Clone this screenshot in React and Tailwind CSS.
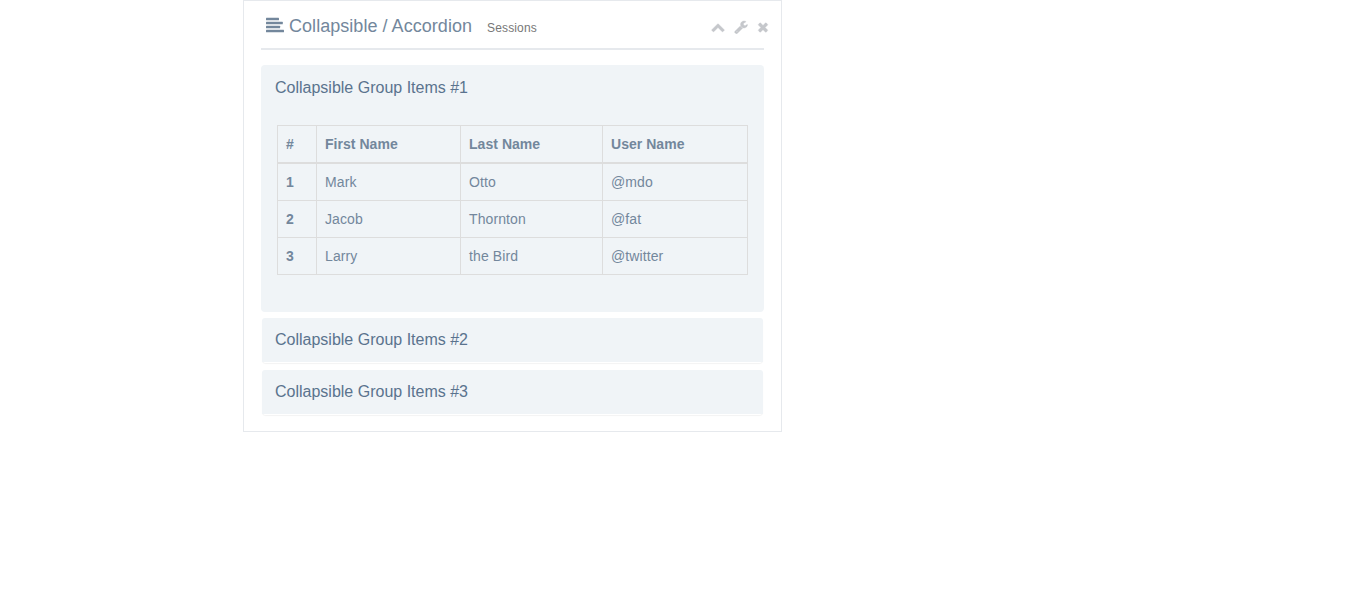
const ICONS = {
  up: "M1683 1331l-166 165q-19 19-45 19t-45-19l-531-531-531 531q-19 19-45 19t-45-19l-166-165q-19-19-19-45.5t19-45.5l742-741q19-19 45-19t45 19l742 741q19 19 19 45.5t-19 45.5z",
  wrench:
    "M448 1472q0-26-19-45t-45-19-45 19-19 45 19 45 45 19 45-19 19-45zm644-420l-682 682q-37 37-90 37-52 0-91-37l-106-108q-38-36-38-90 0-53 38-91l681-681q39 98 114.5 173.5t173.5 114.5zm634-435q0 39-23 106-47 134-164.5 217.5t-258.5 83.5q-185 0-316.5-131.5t-131.5-316.5 131.5-316.5 316.5-131.5q58 0 121.5 16.5t107.5 46.5q16 11 16 28t-16 28l-293 169v224l193 107q5-3 79-48.5t135.5-81 70.5-35.5q15 0 23.5 10t8.5 25z",
  close:
    "M1490 1322q0 40-28 68l-136 136q-28 28-68 28t-68-28l-294-294-294 294q-28 28-68 28t-68-28l-136-136q-28-28-28-68t28-68l294-294-294-294q-28-28-28-68t28-68l136-136q28-28 68-28t68 28l294 294 294-294q28-28 68-28t68 28l136 136q28 28 28 68t-28 68l-294 294 294 294q28 28 28 68z",
};

function Icon({ name, className }) {
  return (
    <svg viewBox="0 0 1792 1792" className={className} fill="currentColor" stroke="currentColor" strokeWidth="50">
      <path d={ICONS[name]} />
    </svg>
  );
}

function AlignLeft() {
  return (
    <svg viewBox="0 0 18 16" className="mt-4 h-4 w-[18px] shrink-0" fill="currentColor">
      <rect x="0" y="0.8" width="13" height="2.4" rx="0.5" />
      <rect x="0" y="4.8" width="16.8" height="2.4" rx="0.5" />
      <rect x="0" y="8.8" width="14.1" height="2.4" rx="0.5" />
      <rect x="0" y="12.8" width="18" height="2.4" rx="0.5" />
    </svg>
  );
}

const rows = [
  ["1", "Mark", "Otto", "@mdo"],
  ["2", "Jacob", "Thornton", "@fat"],
  ["3", "Larry", "the Bird", "@twitter"],
];

function CollapsedItem({ title }) {
  return (
    <div className="mx-px h-[45px] rounded-[4px] shadow-[0_1px_1px_rgba(0,0,0,0.05)]">
      <div className="h-11 rounded-t-[3px] bg-[#f0f4f7] px-[13px] pt-[13px]">
        <h4 className="text-base leading-[18px]">{title}</h4>
      </div>
    </div>
  );
}

export default function App() {
  return (
    <div className="min-h-[613px] bg-white font-['Liberation_Sans',Arial,sans-serif] text-[#5a738e]">
      <section className="ml-[243px] h-[432px] w-[539px] border border-[#e6e9ed] px-[17px]">
        <header className="flex h-[49px] items-start border-b-2 border-[#e6e9ed] pl-[5px] text-[#73879c]">
          <AlignLeft />
          <h2 className="ml-[5px] mt-[15px] whitespace-nowrap text-lg leading-5 tracking-[0.04px]">Collapsible / Accordion</h2>
          <small className="ml-[15px] mt-[19px] text-xs leading-4 tracking-[0.14px] text-[#777]">Sessions</small>
          <div className="-mr-[6px] ml-auto mt-[19px] flex h-[14px] items-center text-[#c5c7cb]">
            <Icon name="up" className="h-[14px] w-[14px]" />
            <Icon name="wrench" className="ml-[9px] h-[14px] w-[14px]" />
            <Icon name="close" className="ml-2 h-[14px] w-[14px]" />
          </div>
        </header>

        <div className="mt-[15px] h-[247px] rounded-[4px] bg-[#f0f4f7]">
          <h4 className="px-[14px] pt-[14px] text-base leading-[18px]">Collapsible Group Items #1</h4>
          <table className="ml-4 mt-7 w-[471px] table-fixed border-collapse text-left text-sm leading-5 text-[#73879c]">
            <colgroup>
              <col className="w-[39px]" />
              <col className="w-[144px]" />
              <col className="w-[142px]" />
              <col className="w-[145px]" />
            </colgroup>
            <thead>
              <tr>
                {["#", "First Name", "Last Name", "User Name"].map((h) => (
                  <th key={h} className="border border-b-2 border-[#ddd] p-2 font-bold tracking-[0.04px]">{h}</th>
                ))}
              </tr>
            </thead>
            <tbody>
              {rows.map((r) => (
                <tr key={r[0]}>
                  {r.map((c, i) => (
                    <td key={c} className={i === 0 ? "border border-[#ddd] p-2 font-bold" : "border border-[#ddd] p-2 tracking-[0.1px]"}>{c}</td>
                  ))}
                </tr>
              ))}
            </tbody>
          </table>
        </div>

        <div className="mt-1.5 flex flex-col gap-[7px]">
          <CollapsedItem title="Collapsible Group Items #2" />
          <CollapsedItem title="Collapsible Group Items #3" />
        </div>
      </section>
    </div>
  );
}
